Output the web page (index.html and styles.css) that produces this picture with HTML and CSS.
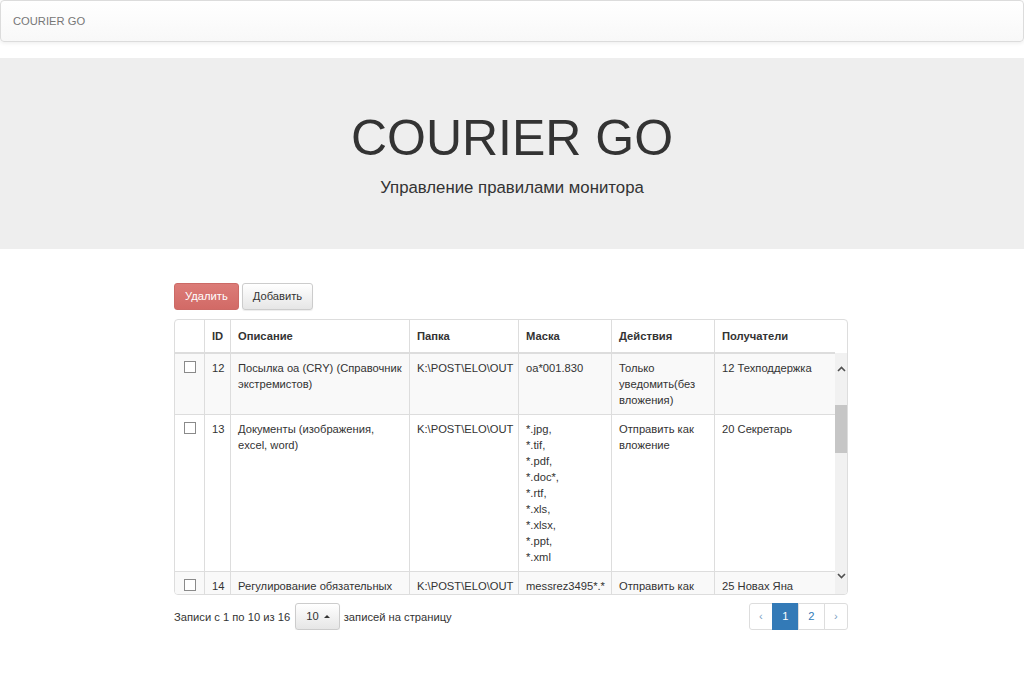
FILE: index.html
```html
<!DOCTYPE html>
<html lang="ru">
<head>
<meta charset="utf-8">
<title>COURIER GO</title>
<link rel="stylesheet" href="styles.css">
</head>
<body>
<nav class="navbar"><span class="brand">COURIER GO</span></nav>

<header class="jumbotron">
  <h1 class="jumbo-title">COURIER GO</h1>
  <p class="jumbo-sub">Управление правилами монитора</p>
</header>

<main class="content">
  <div class="toolbar">
    <button class="btn btn-danger">Удалить</button>
    <button class="btn btn-default">Добавить</button>
  </div>

  <div class="table-box">
    <div class="grid-row head-row">
      <div class="cell"></div>
      <div class="cell">ID</div>
      <div class="cell">Описание</div>
      <div class="cell">Папка</div>
      <div class="cell">Маска</div>
      <div class="cell">Действия</div>
      <div class="cell">Получатели</div>
    </div>
    <div class="table-body">
      <div class="rows">
        <div class="grid-row body-row striped">
          <div class="cell check"><span class="checkbox"></span></div>
          <div class="cell">12</div>
          <div class="cell">Посылка оа (CRY) (Справочник экстремистов)</div>
          <div class="cell">K:\POST\ELO\OUT</div>
          <div class="cell">oa*001.830</div>
          <div class="cell">Только уведомить(без вложения)</div>
          <div class="cell">12 Техподдержка</div>
        </div>
        <div class="grid-row body-row">
          <div class="cell check"><span class="checkbox"></span></div>
          <div class="cell">13</div>
          <div class="cell">Документы (изображения, excel, word)</div>
          <div class="cell">K:\POST\ELO\OUT</div>
          <div class="cell">*.jpg,<br>*.tif,<br>*.pdf,<br>*.doc*,<br>*.rtf,<br>*.xls,<br>*.xlsx,<br>*.ppt,<br>*.xml</div>
          <div class="cell">Отправить как вложение</div>
          <div class="cell">20 Секретарь</div>
        </div>
        <div class="grid-row body-row striped">
          <div class="cell check"><span class="checkbox"></span></div>
          <div class="cell">14</div>
          <div class="cell">Регулирование обязательных требований</div>
          <div class="cell">K:\POST\ELO\OUT</div>
          <div class="cell">messrez3495*.*</div>
          <div class="cell">Отправить как вложение</div>
          <div class="cell">25 Новах Яна</div>
        </div>
      </div>
      <div class="scrollbar">
        <span class="sb-arrow sb-up"><svg width="9" height="6" viewBox="0 0 9 6"><path d="M1 5 L4.5 1.5 L8 5" fill="none" stroke="#505050" stroke-width="1.6"/></svg></span>
        <span class="sb-thumb"></span>
        <span class="sb-fill"></span>
        <span class="sb-arrow sb-down"><svg width="9" height="6" viewBox="0 0 9 6"><path d="M1 1 L4.5 4.5 L8 1" fill="none" stroke="#505050" stroke-width="1.6"/></svg></span>
      </div>
    </div>
  </div>

  <div class="table-footer">
    <div class="page-info">
      <span>Записи с 1 по 10 из 16</span>
      <button class="btn btn-default page-size">10 <span class="caret-up"></span></button>
      <span>записей на страницу</span>
    </div>
    <ul class="pagination">
      <li><a class="page-link">‹</a></li>
      <li><a class="page-link active">1</a></li>
      <li><a class="page-link">2</a></li>
      <li><a class="page-link">›</a></li>
    </ul>
  </div>
</main>
</body>
</html>
```

FILE: styles.css
```css
* { box-sizing: border-box; }

html, body {
  margin: 0;
  padding: 0;
  background: #fff;
}

body {
  font-family: "Liberation Sans", Arial, sans-serif;
  font-size: 11.2px;
  line-height: 16px;
  color: #333;
}

/* Navbar */
.navbar {
  height: 42px;
  margin: 0 0 16px 0;
  border: 1px solid #dcdcdc;
  border-radius: 4px;
  background: linear-gradient(to bottom, #ffffff 0%, #f8f8f8 100%);
  box-shadow: inset 0 1px 0 rgba(255,255,255,.15), 0 1px 4px rgba(0,0,0,.08);
  display: flex;
  align-items: center;
  padding-left: 12px;
}

.brand {
  color: #777;
  font-size: 11.2px;
}

/* Jumbotron */
.jumbotron {
  background: #eeeeee;
  padding: 53px 0 49px;
  text-align: center;
}

.jumbo-title {
  margin: 0 0 10px;
  font-size: 50px;
  line-height: 55px;
  font-weight: 400;
  color: #333;
}

.jumbo-sub {
  margin: 0;
  font-size: 16.8px;
  line-height: 24px;
  color: #333;
}

/* Content */
.content {
  width: 674px;
  margin: 34px 0 0 174px;
}

.toolbar {
  display: flex;
  gap: 3px;
}

.btn {
  font-family: inherit;
  font-size: 11.2px;
  line-height: 15px;
  padding: 5px 10px;
  border: 1px solid transparent;
  border-radius: 3px;
  margin: 0;
  cursor: pointer;
}

.btn-danger {
  color: #fff;
  background: linear-gradient(to bottom, #dc7c78 0%, #d26a66 100%);
  border-color: #cc6a66;
}

.btn-default {
  color: #333;
  background: linear-gradient(to bottom, #ffffff 0%, #e6e6e6 100%);
  border-color: #cccccc;
  box-shadow: inset 0 1px 0 rgba(255,255,255,.15), 0 1px 1px rgba(0,0,0,.075);
}

/* Table */
.table-box {
  margin-top: 9px;
  border: 1px solid #dddddd;
  border-radius: 4px;
  overflow: hidden;
}

.grid-row {
  display: grid;
  grid-template-columns: 29px 26px 179px 109px 93px 103px 121px;
  width: 660px;
}

.cell {
  padding: 6px 7px 6px 7px;
  border-left: 1px solid #dddddd;
  overflow: hidden;
}

.cell:first-child {
  border-left: none;
}

.head-row {
  height: 33px;
  border-bottom: 1px solid #dddddd;
  font-weight: bold;
}

.head-row .cell {
  padding-top: 8px;
}

.table-body {
  display: flex;
  height: 241px;
}

.rows {
  width: 660px;
  overflow: hidden;
}

.body-row {
  border-top: 1px solid #dddddd;
  background: #fff;
}

.body-row.striped {
  background: #f9f9f9;
}

.body-row .cell.check {
  display: flex;
  justify-content: center;
  padding-top: 7px;
}

.checkbox {
  display: block;
  width: 12px;
  height: 12px;
  border: 1px solid #8a8a8a;
  background: #fff;
}

/* Scrollbar */
.scrollbar {
  flex: 1;
  background: #f1f1f1;
  display: flex;
  flex-direction: column;
}

.sb-arrow {
  display: flex;
  justify-content: center;
  align-items: center;
}

.sb-up {
  height: 32px;
}

.sb-down {
  height: 36px;
}

.sb-thumb {
  display: block;
  height: 48px;
  margin-top: 20px;
  background: #c6c6c6;
}

.sb-fill {
  flex: 1;
}

/* Footer */
.table-footer {
  margin-top: 8px;
  display: flex;
  justify-content: space-between;
  align-items: center;
}

.page-info {
  display: flex;
  align-items: center;
}

.page-size {
  margin: 0 4px 0 5px;
  padding: 5px 9px 5px 10px;
  border-radius: 3px;
}

.caret-up {
  display: inline-block;
  width: 0;
  height: 0;
  margin-left: 2px;
  vertical-align: 2px;
  border-left: 3.2px solid transparent;
  border-right: 3.2px solid transparent;
  border-bottom: 3.2px solid #333;
}

.pagination {
  display: flex;
  list-style: none;
  margin: 0;
  padding: 0;
}

.page-link {
  display: block;
  padding: 5px 9.3px;
  line-height: 15px;
  border: 1px solid #dddddd;
  margin-left: -1px;
  color: #337ab7;
  background: #fff;
}

.pagination li:first-child .page-link {
  margin-left: 0;
  border-radius: 3px 0 0 3px;
  color: #7d9fc4;
}

.pagination li:last-child .page-link {
  border-radius: 0 3px 3px 0;
  color: #7d9fc4;
}

.page-link.active {
  background: #337ab7;
  border-color: #337ab7;
  color: #fff;
}
```
